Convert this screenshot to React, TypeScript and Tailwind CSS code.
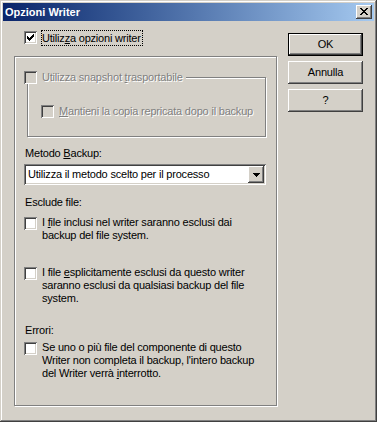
const FACE = "bg-[#d4d0c8]";

// turn rows of "x" into a pixel path
function pixels(rows: string[]) {
  let d = "";
  rows.forEach((r, y) => {
    for (let x = 0; x < r.length; x++) if (r[x] === "x") d += `M${x} ${y}h1v1h-1z`;
  });
  return d;
}

const CHECK = pixels(["......x", ".....xx", "x...xxx", "xx.xxx.", "xxxxx..", ".xxx...", "..x...."]);
const CLOSE = pixels(["xx....xx", ".xx..xx.", "..xxxx..", "...xx...", "..xxxx..", ".xx..xx.", "xx....xx"]);
const ARROW = pixels(["xxxxxxx", ".xxxxx.", "..xxx..", "...x..."]);

const raised =
  "shadow-[inset_-1px_-1px_#404040,inset_1px_1px_#ffffff,inset_-2px_-2px_#808080,inset_2px_2px_#d4d0c8]";
const sunken =
  "shadow-[inset_1px_1px_#808080,inset_-1px_-1px_#ffffff,inset_2px_2px_#404040,inset_-2px_-2px_#d4d0c8]";
const etched = "border border-[#808080] shadow-[inset_1px_1px_#ffffff,1px_1px_#ffffff]";

function Check({ checked, disabled }: { checked?: boolean; disabled?: boolean }) {
  return (
    <span
      className={`relative block h-[13px] w-[13px] shrink-0 ${sunken} ${
        disabled ? "bg-[#d4d0c8]" : "bg-white"
      }`}
    >
      {checked && (
        <svg className="absolute left-[3px] top-[3px]" width={7} height={7} shapeRendering="crispEdges">
          <path d={CHECK} fill="#000" />
        </svg>
      )}
    </span>
  );
}

function Button({ label, primary }: { label: string; primary?: boolean }) {
  return (
    <div
      className={`flex h-[23px] w-[75px] items-center justify-center ${FACE} ${
        primary ? "border border-black" : ""
      }`}
    >
      <div className={`flex h-full w-full items-center justify-center ${raised}`}>{label}</div>
    </div>
  );
}

function CheckRow({ children, className }: { children: React.ReactNode; className: string }) {
  return (
    <div className={`flex items-start gap-[5px] ${className}`}>
      <span className="mt-[1px]">
        <Check />
      </span>
      <div className="whitespace-nowrap">{children}</div>
    </div>
  );
}

export default function App() {
  return (
    <div
      className={`flex h-[422px] w-[377px] flex-col p-[3px] ${FACE} font-['Liberation_Sans',Arial,sans-serif] text-[11px] leading-[13px] tracking-[-0.2px] text-black shadow-[inset_-1px_-1px_#404040,inset_1px_1px_#d4d0c8,inset_-2px_-2px_#808080,inset_2px_2px_#ffffff]`}
    >
      {/* title bar */}
      <div className="flex h-[18px] items-center justify-between bg-linear-to-r from-[#0a246a] to-[#a6caf0] pl-[2px] pr-[2px]">
        <span className="text-[11px] font-bold tracking-normal text-white">Opzioni Writer</span>
        <span className={`flex h-[14px] w-[16px] items-center justify-center ${FACE} ${raised}`}>
          <svg width={8} height={7} shapeRendering="crispEdges" className="-mt-[1px]">
            <path d={CLOSE} fill="#000" />
          </svg>
        </span>
      </div>

      <div className="flex">
        <div className="ml-[11px] flex w-[264px] flex-col">
          <div className="mt-[9px] flex h-[16px] items-start pl-[10px]">
            <span className="mt-[1px]">
              <Check checked />
            </span>
            <span className="ml-[4px] h-[16px] border border-dotted border-black pr-[1px] leading-[14px]">
              Utiliz<u>z</u>a opzioni writer
            </span>
          </div>

          <div className={`mt-[10px] flex h-[350px] w-[263px] flex-col ${etched}`}>
            {/* disabled snapshot group */}
            <div className={`relative ml-[12px] mt-[20px] h-[60px] w-[239px] ${etched}`}>
              <div
                className={`absolute left-[-4px] top-[-7px] flex items-center gap-[5px] pr-[3px] ${FACE}`}
              >
                <Check disabled />
                <span className="whitespace-nowrap text-[#808080] [text-shadow:1px_1px_0_#ffffff]">
                  Utilizza snapshot <u>t</u>rasportabile
                </span>
              </div>
              <div className="flex items-center gap-[5px] pl-[13px] pt-[27px]">
                <Check disabled />
                <span className="whitespace-nowrap text-[#808080] [text-shadow:1px_1px_0_#ffffff]">
                  <u>M</u>antieni la copia repricata dopo il backup
                </span>
              </div>
            </div>

            <div className="ml-[10px] mt-[10px]">
              Metodo <u>B</u>ackup:
            </div>

            <div className={`ml-[9px] mt-[4px] flex h-[21px] w-[242px] bg-white p-[2px] ${sunken}`}>
              <div className="flex flex-1 items-center whitespace-nowrap pl-[2px]">
                Utilizza il metodo scelto per il processo
              </div>
              <div className={`flex h-[17px] w-[16px] items-center justify-center ${FACE} ${raised}`}>
                <svg width={7} height={4} shapeRendering="crispEdges">
                  <path d={ARROW} fill="#000" />
                </svg>
              </div>
            </div>

            <div className="ml-[10px] mt-[11px]">Esclude file:</div>

            <CheckRow className="ml-[9px] mt-[7px]">
              I <u>f</u>ile inclusi nel writer saranno esclusi dai
              <br />
              backup del file system.
            </CheckRow>

            <CheckRow className="ml-[9px] mt-[24px]">
              I file <u>e</u>splicitamente esclusi da questo writer
              <br />
              saranno esclusi da qualsiasi backup del file
              <br />
              system.
            </CheckRow>

            <div className="ml-[10px] mt-[19px]">Errori:</div>

            <CheckRow className="ml-[9px] mt-[4px]">
              Se uno o più file del componente di questo
              <br />
              Writer non completa il backup, l'intero backup
              <br />
              del Writer verrà <u>i</u>nterrotto.
            </CheckRow>
          </div>
        </div>

        <div className="ml-[10px] flex flex-col gap-[5px] pt-[12px]">
          <Button label="OK" primary />
          <Button label="Annulla" />
          <Button label="?" />
        </div>
      </div>
    </div>
  );
}
